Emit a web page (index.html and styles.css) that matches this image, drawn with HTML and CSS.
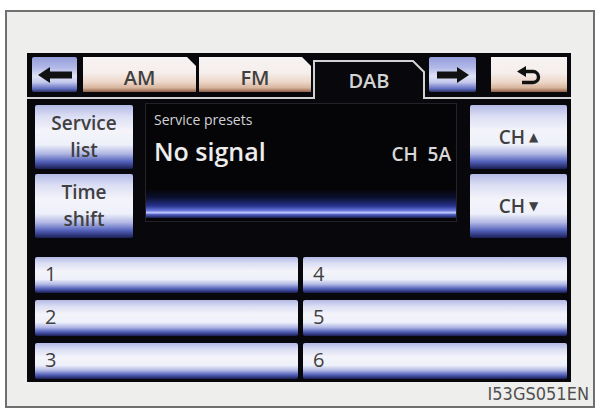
FILE: index.html
```html
<!DOCTYPE html>
<html lang="en">
<head>
  <meta charset="UTF-8">
  <title>DAB Radio</title>
  <link rel="stylesheet" href="styles.css">
</head>
<body>
  <div class="frame">
    <div class="screen">
      <!-- band tabs -->
      <div class="tabs">
        <div class="nav">
          <svg width="34" height="16" viewBox="0 0 34 16"><polygon points="0,8 12,0 12,4.5 34,4.5 34,11.5 12,11.5 12,16" fill="#111"/></svg>
        </div>
        <div class="tab am">AM</div>
        <div class="tab fm">FM</div>
        <div class="tab active">
          <svg class="tab-edge" width="112" height="39" viewBox="0 0 112 39"><path d="M1 39 V1 H100 L111 12 V39" fill="#08080c" stroke="#d2d2d2" stroke-width="2"/></svg>
          <span>DAB</span>
        </div>
        <div class="nav next">
          <svg width="32" height="16" viewBox="0 0 32 16"><polygon points="32,8 20,0 20,4.5 0,4.5 0,11.5 20,11.5 20,16" fill="#111"/></svg>
        </div>
        <div class="back">
          <svg width="26" height="19" viewBox="0 0 26 19"><polygon points="1,5.5 10,0 10,11" fill="#111"/><path d="M9 5.5 H17 A5.5 5.5 0 0 1 17 16.5 H6" fill="none" stroke="#111" stroke-width="3.4"/></svg>
        </div>
      </div>

      <!-- tuner area -->
      <div class="main">
        <div class="col">
          <div class="key">Service<br>list</div>
          <div class="key">Time<br>shift</div>
        </div>
        <div class="display">
          <div class="d-title">Service presets</div>
          <div class="d-row">
            <span class="station">No signal</span>
            <span class="channel">CH&nbsp; 5A</span>
          </div>
          <div class="d-bar"></div>
        </div>
        <div class="col right">
          <div class="key">CH <span class="tri">&#9650;</span></div>
          <div class="key">CH <span class="tri">&#9660;</span></div>
        </div>
      </div>

      <!-- preset memory buttons -->
      <div class="presets">
        <div class="preset">1</div>
        <div class="preset">2</div>
        <div class="preset">3</div>
        <div class="preset">4</div>
        <div class="preset">5</div>
        <div class="preset">6</div>
      </div>
    </div>
    <div class="code">I53GS051EN</div>
  </div>
</body>
</html>
```

FILE: styles.css
```css
* {
  box-sizing: border-box;
}

body {
  margin: 0;
  background: #fff;
  font-family: "Open Sans", "Noto Sans", sans-serif;
}

.frame {
  margin: 10px 0 0 5px;
  width: 590px;
  height: 398px;
  border: 2px solid #707070;
  background: #eeeeec;
  padding: 41px 0 0 20px;
}

.screen {
  width: 544px;
  height: 329px;
  background: #08080c;
}

/* tab row */
.tabs {
  display: flex;
  align-items: flex-start;
  height: 46px;
  padding: 4px 0 0 5px;
  border-bottom: 2px solid #d2d2d2;
}

.nav {
  width: 45px;
  height: 35px;
  display: flex;
  align-items: center;
  justify-content: center;
  border-radius: 2px;
  background: linear-gradient(#939cd8 0%, #b2b9e8 30%, #e0e3f6 55%, #c4c9ec 72%, #6672c2 90%, #2c3468 100%);
}

.nav.next {
  width: 47px;
  margin-left: 4px;
}

.tab {
  height: 35px;
  padding-top: 5px;
  display: flex;
  align-items: center;
  justify-content: center;
  font-size: 20px;
  font-weight: 600;
  color: #404040;
  background: linear-gradient(#f7f3f3 0%, #f5eeec 45%, #ecd6c8 72%, #d8b49c 88%, #8e6048 100%);
  clip-path: polygon(0 0, calc(100% - 9px) 0, 100% 9px, 100% 100%, 0 100%);
}

.tab.am {
  width: 113px;
  margin-left: 6px;
}

.tab.fm {
  width: 112px;
  margin-left: 3px;
}

.tab.active {
  position: relative;
  width: 112px;
  height: 39px;
  margin: 3px 0 -2px 2px;
  padding-top: 2px;
  z-index: 1;
  background: none;
  clip-path: none;
  color: #d4d4d4;
}

.tab-edge {
  position: absolute;
  top: 0;
  left: 0;
}

.tab.active span {
  position: relative;
}

.back {
  width: 76px;
  height: 35px;
  margin-left: 15px;
  display: flex;
  align-items: center;
  justify-content: center;
  padding-top: 2px;
  background: linear-gradient(#f7f3f3 0%, #f5eeec 45%, #ecd6c8 72%, #d8b49c 88%, #8e6048 100%);
}

/* middle section */
.main {
  display: flex;
  height: 133px;
  margin-top: 6px;
  padding-left: 8px;
}

.col {
  width: 98px;
  display: grid;
  grid-template-rows: 1fr 1fr;
  gap: 5px;
}

.col.right {
  width: 97px;
  margin-left: 13px;
}

.key,
.preset {
  border-radius: 2px;
  color: #404040;
  font-weight: 600;
  background: linear-gradient(#b3b9e6 0%, #dcdff4 18%, #f4f4fa 40%, #eef0fa 62%, #b0b7e4 76%, #5563bb 88%, #1a1e55 100%);
}

.key {
  display: flex;
  align-items: center;
  justify-content: center;
  text-align: center;
  font-size: 19px;
  line-height: 27px;
}

.tri {
  font-size: 12px;
  margin-left: 4px;
  font-family: "DejaVu Sans", sans-serif;
}

.display {
  width: 312px;
  height: 119px;
  margin: -2px 0 0 12px;
  display: flex;
  flex-direction: column;
  background: #050507;
  border: 1px solid #222228;
}

.d-title {
  padding: 7px 0 0 8px;
  font-size: 14px;
  line-height: 18px;
  color: #d2d2d6;
}

.d-row {
  display: flex;
  justify-content: space-between;
  align-items: baseline;
  padding: 5px 5px 0 8px;
  color: #ececec;
}

.station {
  font-size: 25px;
  font-weight: 600;
}

.channel {
  font-size: 19px;
  font-weight: 600;
  color: #d8d8d8;
}

.d-bar {
  margin: auto 0 3px;
  height: 29px;
  background: linear-gradient(#050507 0%, #0c1030 30%, #26328c 58%, #6676d8 74%, #c4ccff 82%, #5260c0 88%, #161c50 100%);
}

/* presets */
.presets {
  display: grid;
  grid-template-columns: 263px 264px;
  grid-template-rows: repeat(3, 36px);
  grid-auto-flow: column;
  column-gap: 5px;
  row-gap: 7px;
  margin: 19px 0 0 8px;
}

.preset {
  display: flex;
  align-items: center;
  padding: 0 0 3px 10px;
  font-size: 20px;
  font-weight: 400;
}

.code {
  margin-top: 1px;
  padding-right: 4px;
  text-align: right;
  font-family: "Liberation Sans Narrow", "DejaVu Sans Condensed", "Liberation Sans", sans-serif;
  font-size: 18px;
  color: #505050;
}
```
